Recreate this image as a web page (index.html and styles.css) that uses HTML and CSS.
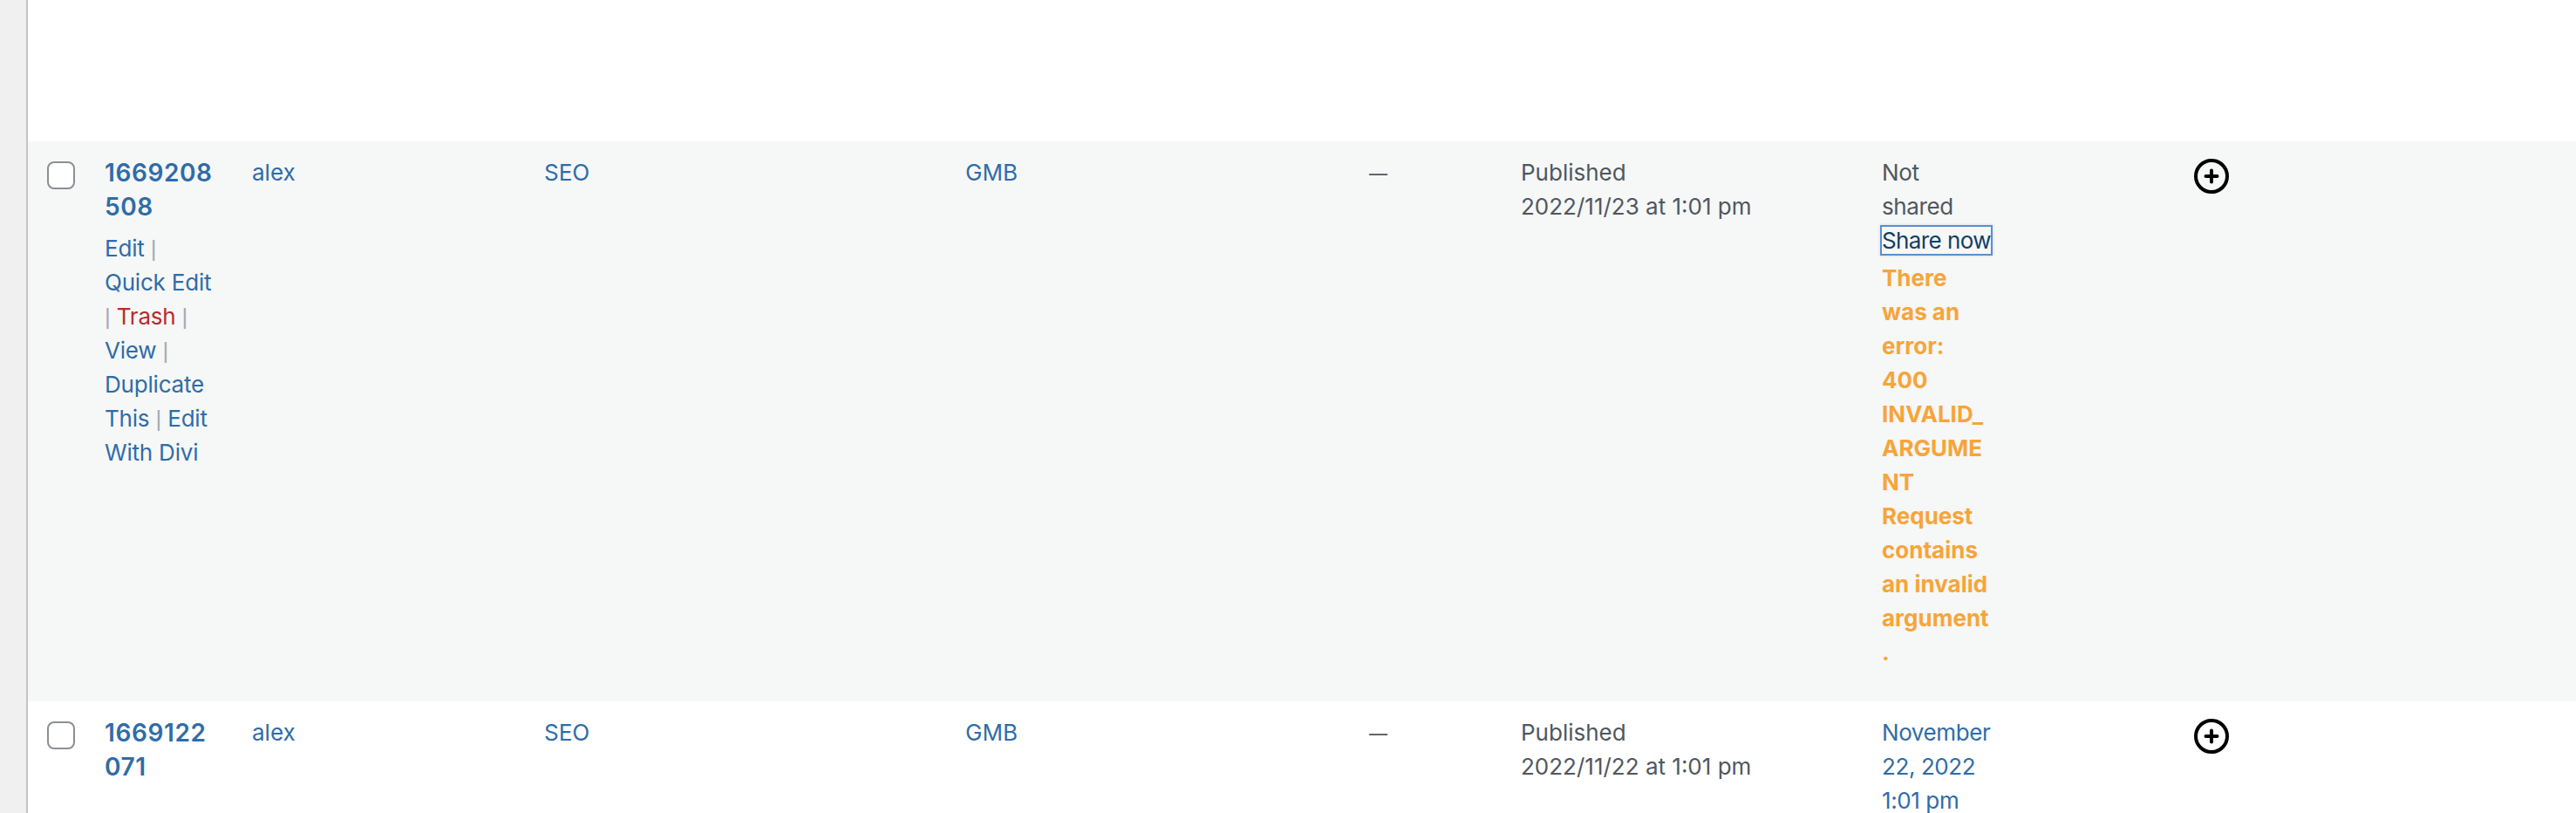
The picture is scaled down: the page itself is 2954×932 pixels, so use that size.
FILE: index.html
```html
<!DOCTYPE html>
<html lang="en">
<head>
    <meta charset="UTF-8">
    <meta name="viewport" content="width=device-width, initial-scale=1.0">
    <title>Posts</title>
    <link rel="stylesheet" href="styles.css">
</head>
<body>
    <div class="content">
        <table class="posts-table">
            <colgroup>
                <col class="col-check">
                <col class="col-title">
                <col class="col-author">
                <col class="col-categories">
                <col class="col-tags">
                <col class="col-comments">
                <col class="col-date">
                <col class="col-share">
                <col class="col-empty">
                <col class="col-action">
                <col>
            </colgroup>
            <tbody>
                <tr class="spacer-row"><td colspan="11"></td></tr>
                <tr class="post-row alt">
                    <td class="check-cell"><span class="checkbox"></span></td>
                    <td>
                        <a class="post-title" href="#">1669208508</a>
                        <div class="row-actions">
                            <a href="#">Edit</a> <span class="sep">|</span>
                            <a href="#">Quick Edit</a> <span class="sep">|</span>
                            <a class="trash" href="#">Trash</a> <span class="sep">|</span>
                            <a href="#">View</a> <span class="sep">|</span>
                            <a href="#">Duplicate This</a> <span class="sep">|</span>
                            <a href="#">Edit With Divi</a>
                        </div>
                    </td>
                    <td><a href="#">alex</a></td>
                    <td><a href="#">SEO</a></td>
                    <td><a href="#">GMB</a></td>
                    <td><span class="dash">—</span></td>
                    <td>Published<br>2022/11/23 at 1:01 pm</td>
                    <td>
                        <span class="share-status">Not shared</span><br>
                        <a class="share-now" href="#">Share now</a>
                        <div class="share-error">There was an error: 400 INVALID_ARGUMENT Request contains an invalid argument.</div>
                    </td>
                    <td></td>
                    <td>
                        <svg class="plus-icon" viewBox="0 0 40 40"><circle cx="20" cy="20" r="18" /><path d="M20 13.5v13M13.5 20h13" /></svg>
                    </td>
                    <td></td>
                </tr>
                <tr class="post-row">
                    <td class="check-cell"><span class="checkbox"></span></td>
                    <td>
                        <a class="post-title" href="#">1669122071</a>
                    </td>
                    <td><a href="#">alex</a></td>
                    <td><a href="#">SEO</a></td>
                    <td><a href="#">GMB</a></td>
                    <td><span class="dash">—</span></td>
                    <td>Published<br>2022/11/22 at 1:01 pm</td>
                    <td><a class="share-status" href="#">November 22, 2022 1:01 pm</a></td>
                    <td></td>
                    <td>
                        <svg class="plus-icon" viewBox="0 0 40 40"><circle cx="20" cy="20" r="18" /><path d="M20 13.5v13M13.5 20h13" /></svg>
                    </td>
                    <td></td>
                </tr>
            </tbody>
        </table>
    </div>
</body>
</html>
```

FILE: styles.css
```css
html, body {
    height: 100%;
    overflow: hidden;
}
body {
    font-family: Inter, "Liberation Sans", sans-serif;
    font-size: 26px;
    line-height: 39px;
    margin: 0;
    padding: 0;
    background-color: #f0f0f1;
    color: #50575e;
}
a {
    color: #2f6ca8;
    text-decoration: none;
}
.content {
    margin-left: 30px;
    border-left: 2px solid #c3c4c7;
    background-color: #fff;
}
.posts-table {
    width: 100%;
    table-layout: fixed;
    border-collapse: collapse;
}
.col-check { width: 68px; }
.col-title { width: 169px; }
.col-author { width: 335px; }
.col-categories { width: 483px; }
.col-tags { width: 463px; }
.col-comments { width: 174px; }
.col-date { width: 414px; }
.col-share { width: 168px; }
.col-empty { width: 190px; }
.col-action { width: 120px; }
.spacer-row td {
    height: 162px;
    padding: 0;
}
.post-row td {
    padding: 16px 20px;
    vertical-align: top;
    overflow-wrap: break-word;
}
.post-row.alt {
    background-color: #f6f7f7;
}
.post-row .check-cell {
    padding: 23px 0 0 22px;
}
.checkbox {
    display: block;
    width: 32px;
    height: 32px;
    box-sizing: border-box;
    border: 2px solid #8c8f94;
    border-radius: 8px;
    background-color: #fff;
}
.post-title {
    font-size: 28px;
    font-weight: 600;
    letter-spacing: 0.6px;
    display: block;
    padding-top: 1px;
    margin-bottom: 8px;
}
.row-actions {
    color: #a7aaad;
    letter-spacing: -0.2px;
}
.row-actions .sep {
    font-family: "Liberation Sans", sans-serif;
    line-height: 1;
}
.row-actions .trash {
    color: #b32d2e;
}
.dash {
    font-size: 21px;
}
.share-status {
    letter-spacing: -0.4px;
}
.share-now {
    color: #0f3f66;
    letter-spacing: -0.6px;
    white-space: nowrap;
    outline: 2px solid #5b8fce;
    box-shadow: 0 0 3px 2px rgba(91, 143, 206, 0.3);
}
.share-error {
    color: #f6a53a;
    font-weight: 700;
    margin-top: 4px;
    margin-bottom: 21px;
}
.plus-icon {
    display: block;
    width: 40px;
    height: 40px;
    margin-top: 4px;
    fill: none;
    stroke: #000;
    stroke-width: 4px;
    stroke-linecap: round;
}
```
